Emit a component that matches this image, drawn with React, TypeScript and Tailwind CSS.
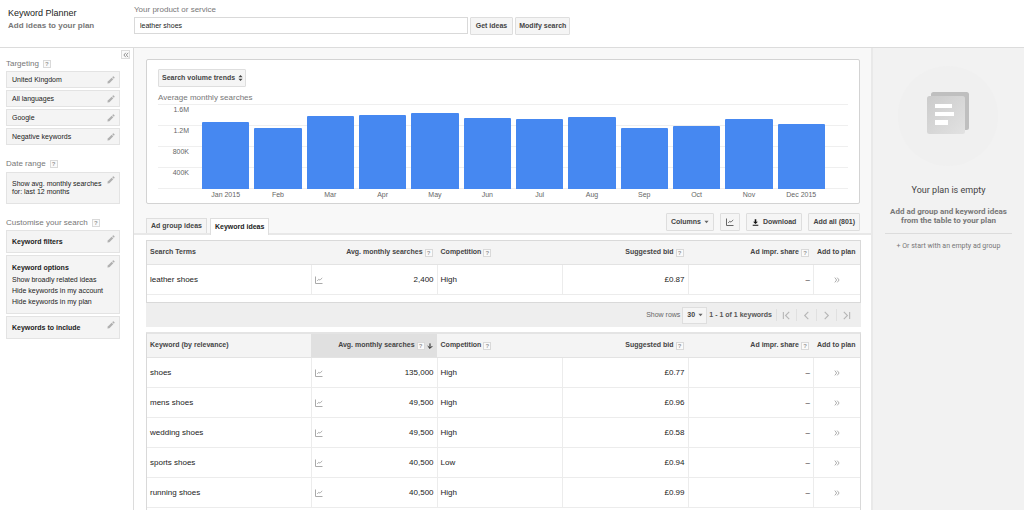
import { type ReactNode } from 'react';
import clsx from 'clsx';

interface KeywordRow {
  keyword: string;
  searches: string;
  competition: string;
  bid: string;
}

const searchTerms: KeywordRow[] = [
  { keyword: 'leather shoes', searches: '2,400', competition: 'High', bid: '£0.87' },
];

const keywordIdeas: KeywordRow[] = [
  { keyword: 'shoes', searches: '135,000', competition: 'High', bid: '£0.77' },
  { keyword: 'mens shoes', searches: '49,500', competition: 'High', bid: '£0.96' },
  { keyword: 'wedding shoes', searches: '49,500', competition: 'High', bid: '£0.58' },
  { keyword: 'sports shoes', searches: '40,500', competition: 'Low', bid: '£0.94' },
  { keyword: 'running shoes', searches: '40,500', competition: 'High', bid: '£0.99' },
];

// Monthly volume in thousands
const trend = [
  { label: 'Jan 2015', value: 1270 },
  { label: 'Feb', value: 1140 },
  { label: 'Mar', value: 1380 },
  { label: 'Apr', value: 1400 },
  { label: 'May', value: 1435 },
  { label: 'Jun', value: 1335 },
  { label: 'Jul', value: 1310 },
  { label: 'Aug', value: 1355 },
  { label: 'Sep', value: 1155 },
  { label: 'Oct', value: 1180 },
  { label: 'Nov', value: 1310 },
  { label: 'Dec 2015', value: 1225 },
];
const TREND_MAX = 1600;
const ticks = ['1.6M', '1.2M', '800K', '400K'];

const targeting = ['United Kingdom', 'All languages', 'Google', 'Negative keywords'];

const buttonClass =
  'flex h-[18px] items-center justify-center rounded-[1px] border border-[#dedede] bg-[#f5f5f5] text-[7px] font-bold text-[#444]';

function Help() {
  return (
    <button
      type="button"
      aria-label="Help"
      className="inline-flex h-2 w-2 shrink-0 items-center justify-center border border-[#d9d9d9] bg-[#fafafa] text-[6px] leading-none font-bold text-[#999]"
    >
      ?
    </button>
  );
}

function PencilIcon() {
  return (
    <svg viewBox="0 0 8 8" className="h-2 w-2" fill="#b0b0b0" aria-hidden="true">
      <path d="M0.4 7.6 L0.8 5.6 L4.7 1.7 L6.3 3.3 L2.4 7.2 Z" />
      <path d="M5.2 1.2 L5.9 0.5 Q6.3 0.2 6.7 0.5 L7.5 1.3 Q7.8 1.7 7.5 2.1 L6.8 2.8 Z" />
    </svg>
  );
}

function GraphIcon({ className }: { className?: string }) {
  return (
    <svg viewBox="0 0 8 8" className={clsx('h-2 w-2', className)} fill="none" stroke="currentColor" aria-hidden="true">
      <path d="M0.5 0.5 V7.5 H7.5" strokeWidth="1" />
      <path d="M2.2 5 L3.8 3.2 L5 4.2 L7.2 1.8" strokeWidth="0.9" />
    </svg>
  );
}

function Caret() {
  return (
    <svg viewBox="0 0 6 4" className="h-1 w-[5px]" fill="#666" aria-hidden="true">
      <path d="M0.5 0.5 H5.5 L3 3.5 Z" />
    </svg>
  );
}

function SideTitle({ children }: { children: ReactNode }) {
  return (
    <h2 className="flex items-center gap-1 text-[8px] leading-[10px] text-[#777]">
      {children}
      <Help />
    </h2>
  );
}

function SideBox({ label, className, children }: { label: string; className?: string; children: ReactNode }) {
  return (
    <div
      className={clsx(
        'flex items-start justify-between border border-[#e3e3e3] bg-[#f4f4f4] pr-1 pl-[5px] text-[7px] text-[#222]',
        className,
      )}
    >
      <div className="whitespace-nowrap">{children}</div>
      <button type="button" aria-label={`Edit ${label}`} className="mt-1 shrink-0">
        <PencilIcon />
      </button>
    </div>
  );
}

function Sidebar() {
  return (
    <aside className="w-[134px] shrink-0 border-r border-[#dcdcdc] pr-[3px] pl-[6px]">
      <div className="flex justify-end pt-[2px]">
        <button
          type="button"
          aria-label="Collapse sidebar"
          className="flex h-[9px] w-[9px] items-center justify-center border border-[#dcdcdc] bg-[#fafafa]"
        >
          <svg viewBox="0 0 6 6" className="h-[6px] w-[6px]" fill="none" stroke="#777" strokeWidth="0.8" aria-hidden="true">
            <path d="M2.8 0.8 L0.9 3 L2.8 5.2 M5.2 0.8 L3.3 3 L5.2 5.2" />
          </svg>
        </button>
      </div>

      <div className="pr-[10px]">
        <SideTitle>Targeting</SideTitle>
        <div className="mt-[2px] flex flex-col gap-[2px]">
          {targeting.map((item) => (
            <SideBox key={item} label={item} className="h-[17px] leading-[15px]">
              {item}
            </SideBox>
          ))}
        </div>

        <div className="mt-[14px]">
          <SideTitle>Date range</SideTitle>
        </div>
        <SideBox label="date range" className="mt-[3px] py-[7px] leading-[8px] [&>button]:-mt-1">
          Show avg. monthly searches
          <br />
          for: last 12 months
        </SideBox>

        <div className="mt-[14px]">
          <SideTitle>Customise your search</SideTitle>
        </div>
        <div className="mt-[2px] flex flex-col gap-[2px]">
          <SideBox label="keyword filters" className="h-[23px] leading-[21px]">
            <b>Keyword filters</b>
          </SideBox>
          <SideBox label="keyword options" className="leading-[11px]">
            <div className="py-[6px]">
              <b className="mb-px block">Keyword options</b>
              <p>Show broadly related ideas</p>
              <p>Hide keywords in my account</p>
              <p>Hide keywords in my plan</p>
            </div>
          </SideBox>
          <SideBox label="keywords to include" className="h-[23px] leading-[21px]">
            <b>Keywords to include</b>
          </SideBox>
        </div>
      </div>
    </aside>
  );
}

function TrendChart() {
  return (
    <section className="rounded-[2px] border border-[#d3d3d3] bg-white px-[11px] pt-[9px] pb-[3px]">
      <div className="relative flex w-[88px]">
        <select
          aria-labelledby="chart-title"
          className="h-[18px] w-full appearance-none rounded-[1px] border border-[#dedede] bg-[#f5f5f5] pl-[3px] text-[7px] font-bold text-[#444]"
        >
          <option>Search volume trends</option>
        </select>
        <svg viewBox="0 0 6 8" className="pointer-events-none absolute top-[5px] right-[3px] h-2 w-[5px]" fill="#444" aria-hidden="true">
          <path d="M3 0.5 L5.5 3 H0.5 Z M3 7.5 L0.5 5 H5.5 Z" />
        </svg>
      </div>
      <h2 id="chart-title" className="mt-1 text-[8px] leading-[13px] text-[#777]">
        Average monthly searches
      </h2>

      <div className="grid">
        <div className="col-start-1 row-start-1 border-b border-[#efefef]">
          {ticks.map((tick) => (
            <div key={tick} className="h-[21px] border-t border-[#efefef]">
              <span className="block w-[31px] text-right text-[7px] leading-[9px] text-[#666]">{tick}</span>
            </div>
          ))}
        </div>
        <div className="col-start-1 row-start-1 mr-[23px] ml-[44px] flex items-end gap-[5px]">
          {trend.map((month) => (
            <div
              key={month.label}
              className="flex-1 rounded-t-[1px] bg-[#4688f1]"
              style={{ height: `${(month.value / TREND_MAX) * 100}%` }}
            />
          ))}
        </div>
      </div>
      <div className="mr-[23px] ml-[44px] flex gap-[5px] text-center text-[7px] leading-[11px] text-[#666]">
        {trend.map((month) => (
          <span key={month.label} className="flex-1 whitespace-nowrap">
            {month.label}
          </span>
        ))}
      </div>
    </section>
  );
}

function Toolbar() {
  return (
    <div className="mt-[9px] flex h-5 justify-between">
      <div className="flex items-end gap-[3px]" role="tablist">
        <button
          type="button"
          role="tab"
          aria-selected="false"
          className="h-[15px] border border-b-0 border-[#dedede] bg-[#f5f5f5] px-1 text-[7px] font-bold text-[#444]"
        >
          Ad group ideas
        </button>
        <button
          type="button"
          role="tab"
          aria-selected="true"
          className="-mb-[2px] h-[17px] border border-b-0 border-[#dedede] bg-white px-1 text-[7px] font-bold text-[#222]"
        >
          Keyword ideas
        </button>
      </div>
      <div className="flex gap-[6px]">
        <button type="button" className={clsx(buttonClass, 'gap-[3px] px-1')}>
          Columns
          <Caret />
        </button>
        <button type="button" aria-label="Show chart" className={clsx(buttonClass, 'px-[5px]')}>
          <GraphIcon className="text-[#666]" />
        </button>
        <button type="button" className={clsx(buttonClass, 'gap-1 px-[5px]')}>
          <svg viewBox="0 0 8 8" className="h-[7px] w-[7px]" fill="#111" aria-hidden="true">
            <path d="M3.1 0.2 H4.9 V3 H6.8 L4 5.8 L1.2 3 H3.1 Z M0.8 6.6 H7.2 V7.7 H0.8 Z" />
          </svg>
          Download
        </button>
        <button type="button" className={clsx(buttonClass, 'px-1')}>
          Add all (801)
        </button>
      </div>
    </div>
  );
}

function HeadCell({ children, right, className }: { children: ReactNode; right?: boolean; className?: string }) {
  return (
    <th scope="col" className={clsx('h-6 border-b border-[#e3e3e3] px-1 font-bold', className)}>
      <div className={clsx('flex items-center gap-[2px] whitespace-nowrap', right && 'justify-end')}>{children}</div>
    </th>
  );
}

function KeywordTable({ title, rows, sorted }: { title: string; rows: KeywordRow[]; sorted?: boolean }) {
  const cell = 'h-[30px] border-b border-l border-[#ececec] px-[3px]';

  return (
    <table className="w-full table-fixed border-separate border-spacing-0 text-left text-[8px] text-[#222]">
      <thead className="bg-[#f4f4f4] text-[7px] text-[#444]">
        <tr>
          <HeadCell className="pl-[3px]">{title}</HeadCell>
          <HeadCell right className={clsx('w-[17.6%]', sorted && 'bg-[#e0e0e0]')}>
            Avg. monthly searches
            <Help />
            {sorted && (
              <svg viewBox="0 0 6 6" className="h-[6px] w-[6px]" fill="none" stroke="#222" aria-hidden="true">
                <path d="M3 0.4 V5.2 M0.7 3.1 L3 5.4 L5.3 3.1" strokeWidth="1" />
              </svg>
            )}
          </HeadCell>
          <HeadCell className="w-[17.6%]">
            Competition
            <Help />
          </HeadCell>
          <HeadCell right className="w-[17.6%]">
            Suggested bid
            <Help />
          </HeadCell>
          <HeadCell right className="w-[17.6%]">
            Ad impr. share
            <Help />
          </HeadCell>
          <HeadCell className="w-[47px]">Add to plan</HeadCell>
        </tr>
      </thead>
      <tbody>
        {rows.map((row) => (
          <tr key={row.keyword}>
            <td className="h-[30px] border-b border-[#ececec] px-[3px]">{row.keyword}</td>
            <td className={cell}>
              <div className="flex items-center justify-between">
                <GraphIcon className="text-[#aaa]" />
                {row.searches}
              </div>
            </td>
            <td className={cell}>{row.competition}</td>
            <td className={clsx(cell, 'text-right')}>{row.bid}</td>
            <td className={clsx(cell, 'text-right')}>–</td>
            <td className={cell}>
              <button type="button" aria-label={`Add ${row.keyword} to plan`} className="mx-auto block">
                <svg viewBox="0 0 6 6" className="h-[6px] w-[6px]" fill="none" stroke="#999" strokeWidth="0.8" aria-hidden="true">
                  <path d="M0.8 0.6 L2.7 3 L0.8 5.4 M3.2 0.6 L5.1 3 L3.2 5.4" />
                </svg>
              </button>
            </td>
          </tr>
        ))}
      </tbody>
    </table>
  );
}

const pagerIcons = [
  { label: 'First page', d: 'M1.5 1 V9 M8 1 L4 5 L8 9' },
  { label: 'Previous page', d: 'M7 1 L3 5 L7 9' },
  { label: 'Next page', d: 'M3 1 L7 5 L3 9' },
  { label: 'Last page', d: 'M2 1 L6 5 L2 9 M8.5 1 V9' },
];

function Pager() {
  return (
    <div className="flex h-6 items-center justify-end bg-[#eeeeee] pr-[5px] text-[7px] whitespace-nowrap text-[#666]">
      <label className="flex items-center gap-[2px]">
        Show rows
        <span className="relative flex items-center">
          <select className="h-[17px] w-[25px] appearance-none border border-[#dedede] bg-[#f5f5f5] pl-1 text-[7px] font-bold text-[#444]">
            <option>30</option>
          </select>
          <span className="pointer-events-none absolute right-1">
            <Caret />
          </span>
        </span>
      </label>
      <b className="mr-1 ml-[2px] text-[#555]">1 - 1 of 1 keywords</b>
      {pagerIcons.map((icon) => (
        <button
          key={icon.label}
          type="button"
          aria-label={icon.label}
          className="flex h-3 w-5 items-center justify-center border-l border-[#e0e0e0]"
        >
          <svg viewBox="0 0 10 10" className="h-[9px] w-[9px]" fill="none" stroke="#b5b5b5" strokeWidth="1.2" aria-hidden="true">
            <path d={icon.d} />
          </svg>
        </button>
      ))}
    </div>
  );
}

function PlanPanel() {
  return (
    <aside className="flex w-[153px] shrink-0 flex-col items-center border-l-2 border-[#e9e9e9] bg-[#f2f2f2] px-3 pt-[17px] text-center font-[Roboto,sans-serif]">
      <svg viewBox="0 0 102 102" className="h-[102px] w-[102px]" aria-hidden="true">
        <defs>
          <linearGradient id="sheet" x1="0" y1="0" x2="1" y2="1">
            <stop offset="0" stopColor="#cbcbcb" />
            <stop offset="1" stopColor="#e2e2e2" />
          </linearGradient>
        </defs>
        <circle cx="50" cy="51" r="50" fill="#f0f0f0" />
        <rect x="33" y="27" width="38" height="38" rx="2.5" fill="#bfbfbf" />
        <rect x="29" y="31" width="38" height="38" rx="2.5" fill="url(#sheet)" />
        <path d="M37 39 h17 v4 h-17 z M37 47 h19 v4 h-19 z M37 55 h13 v5 h-13 z" fill="#fff" />
      </svg>
      <h2 className="mt-4 text-[9px] leading-[14px] text-[#444]">Your plan is empty</h2>
      <p className="mt-[10px] pb-2 text-[8px] leading-[9px] font-bold whitespace-nowrap text-[#777]">
        Add ad group and keyword ideas
        <br />
        from the table to your plan
      </p>
      <a href="#ad-group" className="w-full border-t border-[#dcdcdc] pt-[7px] text-[7px] leading-[10px] whitespace-nowrap text-[#777]">
        + Or start with an empty ad group
      </a>
    </aside>
  );
}

export default function App() {
  return (
    <div className="flex min-h-screen flex-col bg-white font-['Liberation_Sans',Arial,sans-serif] text-[#222]">
      <header className="flex h-12 shrink-0 border-b border-[#dcdcdc]">
        <div className="w-[134px] shrink-0 pt-[7px] pl-2">
          <h1 className="text-[9px] leading-[12px]">Keyword Planner</h1>
          <p className="text-[8px] leading-[13px] font-bold whitespace-nowrap text-[#777]">Add ideas to your plan</p>
        </div>
        <form className="flex-1 pt-1" onSubmit={(e) => e.preventDefault()}>
          <label htmlFor="product" className="block text-[8px] leading-[12px] text-[#777]">
            Your product or service
          </label>
          <div className="mt-px flex gap-[2px]">
            <input
              id="product"
              type="text"
              defaultValue="leather shoes"
              className="h-[17px] w-[37.5%] min-w-0 border border-[#d9d9d9] px-[5px] text-[7px] text-[#222]"
            />
            <button type="submit" className={clsx(buttonClass, 'px-[5px]')}>
              Get ideas
            </button>
            <button type="button" className={clsx(buttonClass, 'px-[3px]')}>
              Modify search
            </button>
          </div>
        </form>
      </header>

      <div className="flex flex-1">
        <Sidebar />
        <main className="flex min-w-0 flex-1 flex-col">
          <div className="border-b-2 border-[#e8e8e8] bg-[#f8f8f8] pt-[11px] pr-[11px] pl-3">
            <TrendChart />
            <Toolbar />
          </div>
          <div className="flex flex-1 flex-col pt-[5px] pr-[10px] pl-3">
            <div className="border border-[#d9d9d9] pb-[7px]">
              <KeywordTable title="Search Terms" rows={searchTerms} />
            </div>
            <Pager />
            <div className="mt-[5px] flex-1 border border-t-2 border-b-0 border-[#d9d9d9] border-t-[#e4e4e4]">
              <KeywordTable title="Keyword (by relevance)" rows={keywordIdeas} sorted />
            </div>
          </div>
        </main>
        <PlanPanel />
      </div>
    </div>
  );
}
